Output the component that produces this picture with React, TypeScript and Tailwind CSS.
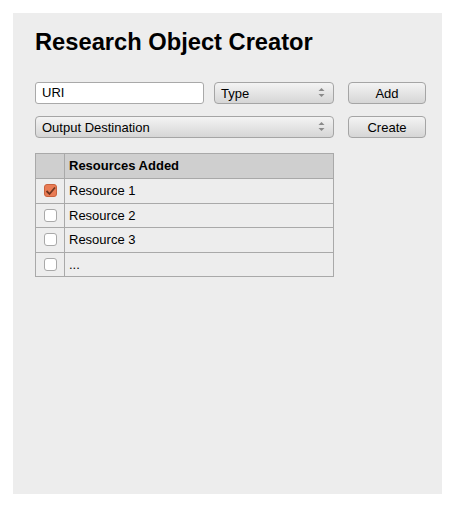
import React from 'react';

const Arrows = () => (
    <svg width="7" height="11" viewBox="0 0 7 11" className="shrink-0">
        <path d="M3.5 1 L6.5 4 L0.5 4 Z" fill="#8a8a8a" />
        <path d="M3.5 10 L6.5 7 L0.5 7 Z" fill="#8a8a8a" />
    </svg>
);

const Check = ({ checked }: { checked?: boolean }) =>
    checked ? (
        <div className="w-[13px] h-[13px] rounded-[3px] bg-[#e97c55] border border-[#c9623d] flex items-center justify-center">
            <svg width="11" height="10" viewBox="0 0 11 10">
                <path d="M1.5 5 L4.5 8 L10 1.5" stroke="#6e3520" strokeWidth="1.8" fill="none" />
            </svg>
        </div>
    ) : (
        <div className="w-[13px] h-[13px] rounded-[3px] bg-white border border-[#a9a9a9]" />
    );

const btn =
    'h-[22px] rounded-[4px] border border-[#a5a5a5] bg-gradient-to-b from-[#f4f4f4] to-[#d6d6d6] text-[13px] text-black';

const App: React.FC = () => {
    const rows = [
        { label: 'Resource 1', checked: true },
        { label: 'Resource 2' },
        { label: 'Resource 3' },
        { label: '...' },
    ];

    return (
        <div className="w-[455px] h-[508px] bg-white pt-[13px] pl-[13px] font-['Liberation_Sans',Arial,sans-serif]">
            <div className="w-[429px] h-[481px] bg-[#ededed] pl-[22px] pt-[15px]">
                <h1 className="text-[23.7px] font-bold text-black leading-[28px]">Research Object Creator</h1>

                <div className="flex items-center mt-[25px] h-[23px]">
                    <div className="w-[169px] h-[22px] bg-white border border-[#a9a9a9] rounded-[3px] px-[6px] flex items-center text-[13px]">
                        URI
                    </div>
                    <div className={`${btn} ml-[10px] w-[120px] flex items-center justify-between pl-[6px] pr-[8px]`}>
                        <span className="pt-[2px]">Type</span>
                        <Arrows />
                    </div>
                    <button className={`${btn} ml-[14px] w-[78px] pt-[1px]`}>Add</button>
                </div>

                <div className="flex items-center mt-[11px] h-[23px]">
                    <div className={`${btn} w-[299px] flex items-center justify-between pl-[6px] pr-[8px]`}>
                        <span className="pt-[2px]">Output Destination</span>
                        <Arrows />
                    </div>
                    <button className={`${btn} ml-[14px] w-[78px] pt-[1px]`}>Create</button>
                </div>

                <table className="mt-[15px] w-[299px] border-collapse text-[13px] text-black">
                    <thead>
                        <tr className="h-[25px] bg-[#cfcfcf]">
                            <th className="w-[29px] border border-[#a9a9a9]"></th>
                            <th className="border border-[#a9a9a9] text-left font-bold pl-[4px]">Resources Added</th>
                        </tr>
                    </thead>
                    <tbody>
                        {rows.map((r, i) => (
                            <tr key={i} className="h-[24.5px]">
                                <td className="border border-[#a9a9a9]">
                                    <div className="flex justify-center">
                                        <Check checked={r.checked} />
                                    </div>
                                </td>
                                <td className="border border-[#a9a9a9] pl-[4px]">{r.label}</td>
                            </tr>
                        ))}
                    </tbody>
                </table>
            </div>
        </div>
    );
};

export default App;
